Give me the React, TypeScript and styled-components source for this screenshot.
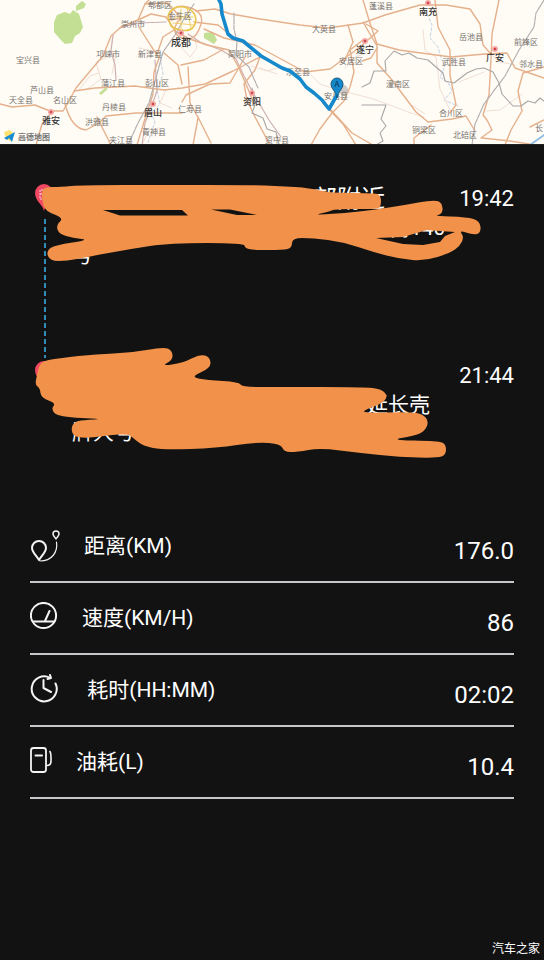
import React from 'react';
import styled, { createGlobalStyle } from 'styled-components';

const GlobalStyle = createGlobalStyle`
  * { box-sizing: border-box; }
  body {
    margin: 0;
    background: #121212;
    color: #fff;
    font-family: Roboto, "Noto Sans CJK SC", sans-serif;
  }
`;

const Page = styled.main`
  display: flex;
  flex-direction: column;
  min-height: 100vh;
  background: #121212;
`;

const MapView = styled.svg`
  display: block;
  width: 100%;
  height: auto;
  background: #fffcf6;
  font-family: "Noto Sans CJK SC", sans-serif;
`;

const Trip = styled.section`
  position: relative;
  display: flex;
  flex-direction: column;
  min-height: 330px;
  padding: 38px 30px 0 34px;
`;

const Stop = styled.div`
  display: grid;
  flex: none;
  grid-template-columns: 20px minmax(0, 1fr) auto;
  column-gap: 18px;
  min-height: 177px;

  & + & {
    min-height: 0;
  }
`;

const Rail = styled.div`
  display: flex;
  flex-direction: column;
  gap: 8px;
`;

const Dashes = styled.div`
  flex: 1;
  width: 2px;
  margin: 0 0 2px 10px;
  background: repeating-linear-gradient(to bottom, #2f8fb8 0 5px, transparent 5px 8px);
`;

const Address = styled.address`
  font-style: normal;
  white-space: nowrap;
`;

const Place = styled.div`
  height: 32px;
  padding-left: 241px;
  font-size: 24px;
  line-height: 32px;
`;

const Street = styled.div<{ $indent?: number }>`
  padding-left: ${(p) => p.$indent ?? 0}px;
  font-size: 21px;
  line-height: 27px;
`;

const Time = styled.time`
  font-size: 22px;
  line-height: 32px;
`;

const Marks = styled.svg`
  position: absolute;
  top: 0;
  left: 0;
  width: 100%;
  height: 100%;
  pointer-events: none;
`;

const Stats = styled.dl`
  margin: 0;
  padding: 36px 30px 0;
`;

const StatRow = styled.div`
  display: flex;
  align-items: center;
  height: 72px;
  border-bottom: 2px solid #c6c6ca;
`;

const StatIcon = styled.svg`
  flex: none;
  margin-right: 24px;
  fill: none;
  stroke: #f4f4f4;
  stroke-width: 2;
  stroke-linecap: round;
  stroke-linejoin: round;
`;

const StatLabel = styled.dt`
  flex: 1;
  font-size: 21px;
  line-height: 28px;
  white-space: pre;
`;

const StatValue = styled.dd`
  margin: 0;
  padding-top: 10px;
  font-size: 24px;
  line-height: 30px;
`;

const Footer = styled.footer`
  margin-top: auto;
  padding: 0 4px 2px;
  text-align: right;
  font-size: 12px;
  line-height: 18px;
`;

type Point = [number, number];

/* Closed curve through the midpoints of the given outline. */
const smooth = (pts: Point[]) => {
  const mid = (a: Point, b: Point) => `${(a[0] + b[0]) / 2} ${(a[1] + b[1]) / 2}`;
  const last = pts[pts.length - 1];
  return (
    `M${mid(last, pts[0])}` +
    pts.map((p, i) => `Q${p[0]} ${p[1]} ${mid(p, pts[(i + 1) % pts.length])}`).join('') +
    'Z'
  );
};

const originMark: Point[] = [
  [42, 191], [45, 187], [60, 187], [83, 185], [165, 185], [250, 185], [280, 186], [310, 188],
  [330, 193], [373, 193], [381, 195], [381, 208], [373, 209], [335, 209], [328, 212], [313, 215],
  [345, 213], [373, 210], [405, 205], [432, 200], [442, 202], [443, 214], [433, 216], [467, 217],
  [480, 221], [481, 233], [473, 235], [459, 230], [464, 237], [460, 246], [450, 253], [425, 261],
  [400, 259], [373, 252], [343, 242], [313, 238], [292, 238], [292, 248], [283, 250], [253, 250],
  [245, 248], [244, 243], [170, 243], [130, 249], [87, 257], [67, 261], [50, 261], [46, 251],
  [55, 245], [90, 240], [73, 238], [59, 234], [56, 225], [64, 218], [45, 211], [42, 200],
];

const originGaps = [
  'M103 210H182L188 215.500H120Z',
  'M211 209.500H230L257 215H237Z',
  'M376 238L403 237L427 230L440 231L455 232L445 236L440 242L423 245L403 244Z',
];

const destinationMark: Point[] = [
  [39, 366], [43, 361], [60, 358], [97, 354], [130, 353], [163, 347], [172, 350], [173, 360],
  [161, 366], [183, 363], [200, 354], [210, 357], [211, 368], [190, 377], [207, 380], [239, 382],
  [242, 387], [280, 387], [363, 387], [382, 389], [388, 397], [381, 404], [364, 410], [364, 413],
  [410, 412], [423, 414], [429, 422], [424, 432], [413, 436], [390, 440], [438, 441], [446, 444],
  [446, 455], [437, 458], [400, 457], [360, 453], [320, 448], [297, 452], [284, 452], [281, 444],
  [257, 442], [217, 448], [163, 450], [143, 446], [132, 437], [128, 434], [110, 435], [90, 438],
  [74, 437], [71, 429], [74, 422], [83, 420], [106, 419], [58, 417], [51, 409], [56, 403],
  [41, 398], [40, 388], [35, 385], [37, 375],
];

const highways = [
  'M0 104L12 107L35 105L50 111L63 111L70 99L76 88L91 70L103 56L111 36L121 27L138 20L145 4L149 0',
  'M74 91L95 88L135 86L164 90L182 88L205 84L233 71L260 57L255 70L244 84L247 100L254 115L270 145',
  'M65 104C69 119 75 129 86 130L99 123L106 116L136 113L182 113',
  'M36 145L42 124L53 111M97 117L111 145',
  'M138 20L151 14L166 17L176 32M139 27L151 46L159 58L154 72L153 94L144 122L137 145M145 4L168 3L181 18',
  'M164 53L178 65L182 84M174 30L163 37L157 54M176 32L190 39L207 45L229 50L239 68L248 89L254 104',
  'M181 18C174 25 171 34 182 38S198 34 201 24S196 9 187 7S169 7 171 20Z',
  'M194 22L218 25L235 39M196 11L215 9L231 14L260 19L300 25L328 28L363 23L385 15L420 5L446 5L470 9L480 24L483 45L490 53',
  'M204 29L224 38L255 45L305 72L330 69L360 47L378 31L366 24M245 57L230 83L210 84L186 95L182 102',
  'M188 67L190 103L199 119L211 143M198 118L193 145M181 65L204 60L224 49',
  'M311 145L320 129L332 113L344 101L350 87L354 72L350 50L363 40M348 25L353 42L344 62',
  'M323 103L343 124L356 145M330 109L352 133L373 145',
  'M363 0L369 20L377 44L399 50L451 57L485 54L507 53L515 68L544 78M363 22L377 46L377 63L392 80L416 112L428 122L452 119L466 116L475 131',
  'M435 0L438 27L450 50L450 75L456 105L450 113M499 0L492 34L491 59L489 95L483 115L487 120L492 130L481 138',
  'M544 67L523 73L518 91L522 111L511 130L505 145M482 138L510 141L535 145M431 125L414 138L414 145',
  'M377 48L371 58L362 61M544 120L530 127',
];

const localRoads = [
  'M79 90L90 76L99 73L96 62L112 55M112 74L115 60L111 48L113 37M86 90L101 79L98 70',
  'M181 47L190 57L197 48L194 35M251 66L267 71L277 68L305 72M260 68L277 74',
  'M309 73L320 84L335 89L354 94L370 98L390 105L408 112L424 117',
  'M423 30L425 50L436 57L440 89L450 110M410 104L425 114M493 56L500 62L515 65',
  'M139 48L165 54M142 145L149 130L159 128M166 90L160 103L172 108',
  'M345 68L355 57L367 53M459 82L484 72M486 111L500 110L522 94',
];

const purpleRoads = [
  'M113 35L111 51L115 65L116 80M120 28L138 23L166 22M155 60L157 91L152 105L145 123L142 145',
  'M188 34L200 42L221 50L236 59L244 76L252 91L269 120L281 137',
];

const rails = [
  'M544 0L536 13L534 27L519 50L505 76L484 104L475 124L472 145M128 145L138 123L149 103L157 74L163 52L175 35L185 17L194 4',
  'M234 13L234 29L237 42L236 55L249 67L254 79L258 88',
];

const districtLines = [
  'M362 87L370 83L374 71L386 71L385 61L394 51L402 55L409 53L417 58L428 60L436 67L443 73L445 81L454 83L467 73L476 69L484 68L493 72L499 83L502 94L513 106L521 106L528 101L535 103L540 98L544 101',
  'M362 105L386 105L381 119L386 126L380 133L383 141L376 145',
  'M252 88L255 105L252 113L263 118L267 129L276 132L279 144',
];

const rivers = [
  'M427 14L432 25L430 38L438 47L441 58L445 66L440 77L449 84L452 91L444 100L458 106',
  'M160 57L163 74L157 90L160 104L151 113L155 122L147 145',
];

const counties: [string, number, number][] = [
  ['宝兴县', 28, 63], ['芦山县', 42, 93], ['天全县', 21, 103], ['名山区', 65, 103],
  ['崇州市', 133, 27], ['郫都区', 160, 8], ['邛崃市', 108, 57], ['新津县', 150, 57],
  ['蒲江县', 113, 86], ['彭山区', 157, 86], ['丹棱县', 114, 110], ['洪雅县', 97, 125],
  ['青神县', 154, 135], ['夹江县', 121, 143], ['金牛区', 180, 19], ['简阳市', 240, 57],
  ['大英县', 324, 32], ['安居区', 351, 64], ['乐至县', 298, 75], ['仁寿县', 190, 112],
  ['安岳县', 336, 99], ['资中县', 277, 143], ['蓬溪县', 381, 9], ['岳池县', 471, 40],
  ['前锋区', 526, 45], ['武胜县', 454, 65], ['潼南区', 398, 87], ['邻水县', 531, 67],
  ['合川区', 451, 116], ['铜梁区', 424, 133], ['北碚区', 465, 138], ['长', 539, 131],
];

const cities: { name: string; x: number; y: number; size: number }[] = [
  { name: '雅安', x: 51, y: 112, size: 9 },
  { name: '眉山', x: 153, y: 104, size: 9 },
  { name: '资阳', x: 252, y: 93, size: 9 },
  { name: '遂宁', x: 365, y: 41, size: 9 },
  { name: '南充', x: 428, y: 3, size: 9 },
  { name: '广安', x: 495, y: 49, size: 9 },
  { name: '成都', x: 181, y: 33, size: 10 },
];

const RoutePreview = () => (
  <MapView viewBox="0 0 544 145" role="img" aria-label="路线地图">
    <g fill="#c2df94">
      <path d="M57 15L65 12L70 14L73 10L79 14L83 27L80 33L75 36L72 43L65 44L60 39L54 32L54 22ZM76 6L82 1L86 4L84 8L76 11Z" />
      <path d="M99 93L105 88L108 89L101 95ZM204 33L213 32L217 40L214 44L204 38Z" />
    </g>
    <g fill="none" strokeLinejoin="round" strokeLinecap="round">
      {rivers.map((d) => <path key={d} d={d} stroke="#c3d2e5" strokeWidth="1" strokeDasharray="3 2" />)}
      {localRoads.map((d) => <path key={d} d={d} stroke="#f0ded4" strokeWidth="1" />)}
      {purpleRoads.map((d) => <path key={d} d={d} stroke="#cfb0b1" strokeWidth="1.2" />)}
      {highways.map((d) => <path key={d} d={d} stroke="#e5b18c" strokeWidth="1.4" />)}
      {rails.map((d) => <path key={d} d={d} stroke="#b5b0b2" strokeWidth="1.2" strokeDasharray="5 1" />)}
      {districtLines.map((d) => <path key={d} d={d} stroke="#a8a6a3" strokeWidth="1.1" />)}
      <path d="M168 17C169 8 179 5 187 8S198 19 194 26S178 31 171 26Z" stroke="#eac64d" strokeWidth="1.6" />
      <path d="M174 17H193M181 9V30M173 23L194 25M187 8L191 28" stroke="#efcf68" strokeWidth="1" />
      <path d="M530 145L544 135" stroke="#94c0e5" strokeWidth="2" />
    </g>
    <circle cx="343" cy="90" r="5" fill="#aaa" opacity=".6" />
    <g fontSize="8" fill="#78736f" textAnchor="middle">
      {counties.map(([name, x, y]) => <text key={name} x={x} y={y}>{name}</text>)}
    </g>
    {cities.map(({ name, x, y, size }) => (
      <g key={name}>
        <circle cx={x} cy={y} r="3" fill="#f3aaa6" />
        <circle cx={x} cy={y} r="1.3" fill="#cc454d" />
        <text x={x} y={y + size + 3} fontSize={size} fill="#333" fontWeight="500" textAnchor="middle">{name}</text>
      </g>
    ))}
    <path
      d="M219 0L221 4L222 14L225 24L228 34L233 38L243 41L261 56L282 68L290 71L300 79L306 87L314 93L322 100L329 109L337 95"
      fill="none"
      stroke="#1689cc"
      strokeWidth="3.6"
      strokeLinejoin="round"
      strokeLinecap="round"
    />
    <path d="M337 98C336 91 331 89 331 84A6 6 0 0 1 343 84C343 89 338 91 337 98Z" fill="#1689cc" stroke="#14577d" strokeWidth="1" />
    <text x="337" y="87" fontSize="8" textAnchor="middle" fill="#102d42">A</text>
    <path d="M4 132L10 130L14 134L11 141L6 139Z" fill="#ffe16b" />
    <path d="M4 138L15 132L12 142L9 138L7 140Z" fill="#178bd0" />
    <text x="18" y="140" fontSize="8" fontWeight="700" fill="#777">高德地图</text>
    <path d="M0 144.5H544" stroke="#24221f" />
  </MapView>
);

const Pin = () => (
  <svg width="20" height="28" viewBox="0 0 20 28" aria-hidden="true">
    <path d="M10 28C9 22 1 18 1 10A9 9 0 0 1 19 10C19 18 11 22 10 28Z" fill="#f04763" />
    <path d="M9 7H6V16H9M6 11H9" fill="none" stroke="#fbd9de" strokeDasharray="2 1" />
  </svg>
);

const DistanceIcon = () => (
  <StatIcon width="30" height="32" viewBox="0 0 30 32">
    <path d="M9 30C6 25 2 22 2 18A7 7 0 0 1 16 18C16 22 12 25 9 30Z" />
    <path d="M26 9C25 7 23 6 23 4A3 3 0 0 1 29 4C29 6 27 7 26 9Z" strokeWidth="1.5" />
    <path d="M26.500 12C28 22 22 31 10 31" strokeWidth="1.200" />
  </StatIcon>
);

const SpeedIcon = () => (
  <StatIcon width="28" height="32" viewBox="0 0 28 32">
    <circle cx="13.500" cy="13.500" r="12.600" />
    <path d="M3 19.500H24M15 19L19.500 9" />
  </StatIcon>
);

const DurationIcon = () => (
  <StatIcon width="28" height="32" viewBox="0 0 28 32">
    <path d="M25.500 9.500A12.500 12.500 0 1 1 20 3.800" />
    <path d="M17.500 5L21 4L20 1" />
    <path d="M13.500 6V14L21 18" />
  </StatIcon>
);

const FuelIcon = () => (
  <StatIcon width="22" height="32" viewBox="0 0 22 32">
    <rect x="1" y="2" width="15" height="24" rx="2.500" strokeWidth="1.800" />
    <path d="M5.500 9.500H12" />
    <path d="M20 5.500C21 7 21 9 21 11V15C21 18 20 19.500 17 19.500" strokeWidth="1.600" />
  </StatIcon>
);

const stats = [
  { label: '距离(KM)', value: '176.0', Icon: DistanceIcon },
  { label: '速度(KM/H)', value: '86', Icon: SpeedIcon },
  { label: ' 耗时(HH:MM)', value: '02:02', Icon: DurationIcon },
  { label: '油耗(L)', value: '10.4', Icon: FuelIcon },
];

export default function App() {
  return (
    <Page>
      <GlobalStyle />
      <RoutePreview />
      <Trip>
        <Stop>
          <Rail>
            <Pin />
            <Dashes />
          </Rail>
          <Address>
            <Place>部附近</Place>
            <Street $indent={317}>街140</Street>
            <Street>号</Street>
          </Address>
          <Time>19:42</Time>
        </Stop>
        <Stop>
          <Rail>
            <Pin />
          </Rail>
          <Address>
            <Place />
            <Street $indent={295}>延长壳</Street>
            <Street>牌大号</Street>
          </Address>
          <Time>21:44</Time>
        </Stop>
        <Marks viewBox="0 145 544 330" preserveAspectRatio="xMinYMin meet" aria-hidden="true">
          <g fill="#f2924a" fillRule="evenodd">
            <path d={smooth(originMark) + originGaps.join('')} />
            <path d={smooth(destinationMark)} />
          </g>
        </Marks>
      </Trip>
      <Stats>
        {stats.map(({ label, value, Icon }) => (
          <StatRow key={label}>
            <Icon />
            <StatLabel>{label}</StatLabel>
            <StatValue>{value}</StatValue>
          </StatRow>
        ))}
      </Stats>
      <Footer>汽车之家</Footer>
    </Page>
  );
}
